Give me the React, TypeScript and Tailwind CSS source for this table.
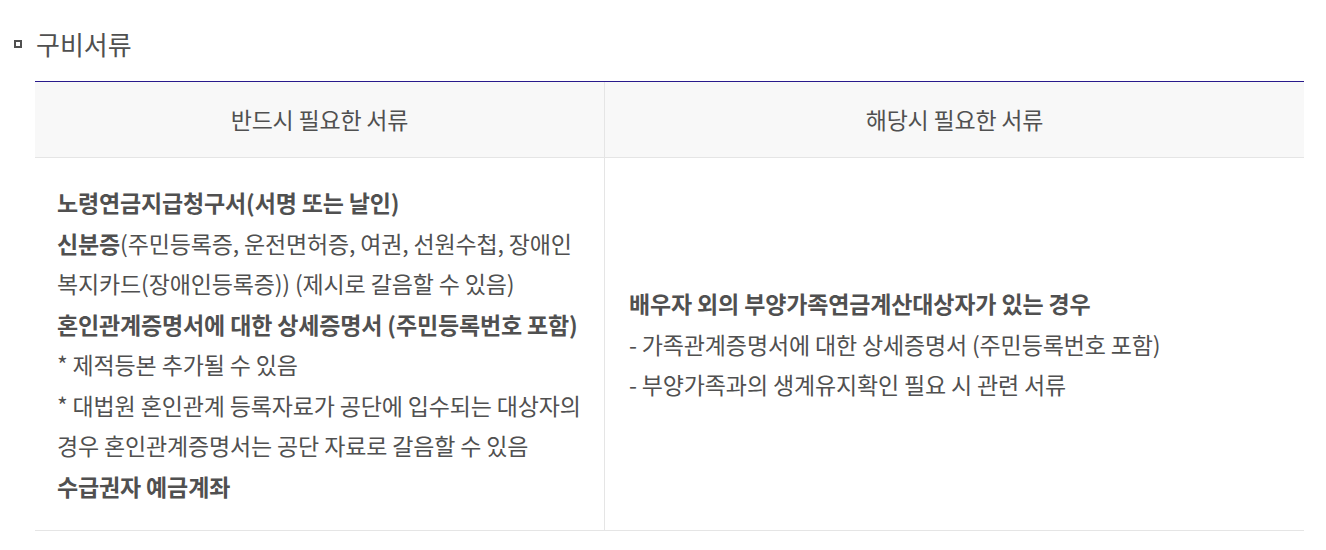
const font = "font-['Noto_Sans_CJK_KR','Noto_Sans',sans-serif]"

const leftItems: { bold?: string; text?: string }[] = [
  { bold: "노령연금지급청구서(서명 또는 날인)" },
  { bold: "신분증", text: "(주민등록증, 운전면허증, 여권, 선원수첩, 장애인 복지카드(장애인등록증)) (제시로 갈음할 수 있음)" },
  { bold: "혼인관계증명서에 대한 상세증명서 (주민등록번호 포함)" },
  { text: "* 제적등본 추가될 수 있음" },
  { text: "* 대법원 혼인관계 등록자료가 공단에 입수되는 대상자의 경우 혼인관계증명서는 공단 자료로 갈음할 수 있음" },
  { bold: "수급권자 예금계좌" },
]

const rightItems = [
  { bold: "배우자 외의 부양가족연금계산대상자가 있는 경우" },
  { text: "- 가족관계증명서에 대한 상세증명서 (주민등록번호 포함)" },
  { text: "- 부양가족과의 생계유지확인 필요 시 관련 서류" },
]

function Item({ bold, text }: { bold?: string; text?: string }) {
  return (
    <p className="leading-[40.5px] break-keep">
      {bold && <strong className="font-bold">{bold}</strong>}
      {text}
    </p>
  )
}

export default function App() {
  return (
    <div className={`${font} bg-white text-[#505050] w-[1326px] h-[550px]`}>
      {/* section title */}
      <div className="flex items-center h-[34px] mt-[27px] pl-[14px]">
        <span className="w-[8px] h-[8px] border-2 border-[#505050] mr-[14px]" />
        <h3 className="text-[26px] leading-[34px]">구비서류</h3>
      </div>

      <div className="ml-[35px] mr-[22px] mt-[20px] border-t border-[#291a8c]">
        <div className="grid grid-cols-[570px_1fr] bg-[#f8f8f8] border-b border-[#e5e5e5] h-[76px] text-[23px] tracking-[-0.2px]">
          <div className="flex items-center justify-center border-r border-[#e5e5e5]">반드시 필요한 서류</div>
          <div className="flex items-center justify-center">해당시 필요한 서류</div>
        </div>
        <div className="grid grid-cols-[570px_1fr] border-b border-[#e5e5e5] text-[23px] tracking-[-0.15px]">
          <div className="border-r border-[#e5e5e5] pl-[22px] pr-[20px] pt-[24px] pb-[24px]">
            {leftItems.map((it, i) => (
              <Item key={i} {...it} />
            ))}
          </div>
          <div className="flex flex-col justify-center pl-[24px] pr-[20px]">
            {rightItems.map((it, i) => (
              <Item key={i} {...it} />
            ))}
          </div>
        </div>
      </div>
    </div>
  )
}
